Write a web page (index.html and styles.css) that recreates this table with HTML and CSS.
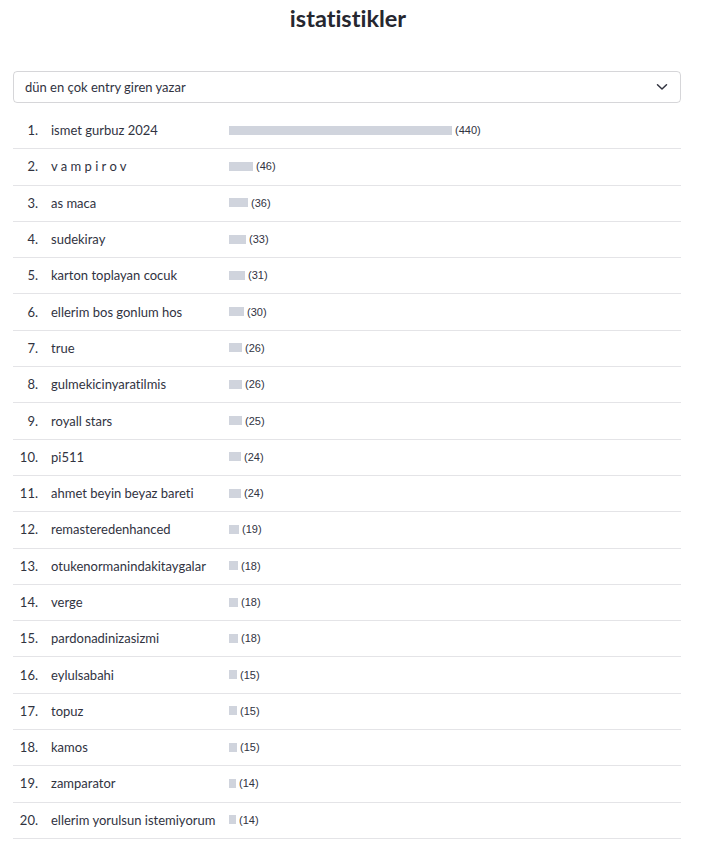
FILE: index.html
```html
<!DOCTYPE html>
<html lang="tr">
<head>
<meta charset="utf-8">
<link rel="stylesheet" href="styles.css">
</head>
<body>
<div class="page">
  <h1 class="title">istatistikler</h1>
  <div class="select">
    <span class="select-text">dün en çok entry giren yazar</span>
    <svg class="chevron" width="12" height="8" viewBox="0 0 12 8"><path d="M1.5 1.8 L6 6 L10.5 1.8" fill="none" stroke="#31333f" stroke-width="1.5" stroke-linecap="round" stroke-linejoin="round"/></svg>
  </div>
  <ol class="list">
    <li class="row"><span class="num">1.</span><span class="name">ismet gurbuz 2024</span><span class="bar" style="width:223px"></span><span class="count">(440)</span></li>
    <li class="row"><span class="num">2.</span><span class="name">v a m p i r o v</span><span class="bar" style="width:24px"></span><span class="count">(46)</span></li>
    <li class="row"><span class="num">3.</span><span class="name">as maca</span><span class="bar" style="width:19px"></span><span class="count">(36)</span></li>
    <li class="row"><span class="num">4.</span><span class="name">sudekiray</span><span class="bar" style="width:17px"></span><span class="count">(33)</span></li>
    <li class="row"><span class="num">5.</span><span class="name">karton toplayan cocuk</span><span class="bar" style="width:16px"></span><span class="count">(31)</span></li>
    <li class="row"><span class="num">6.</span><span class="name">ellerim bos gonlum hos</span><span class="bar" style="width:15px"></span><span class="count">(30)</span></li>
    <li class="row"><span class="num">7.</span><span class="name">true</span><span class="bar" style="width:13px"></span><span class="count">(26)</span></li>
    <li class="row"><span class="num">8.</span><span class="name">gulmekicinyaratilmis</span><span class="bar" style="width:13px"></span><span class="count">(26)</span></li>
    <li class="row"><span class="num">9.</span><span class="name">royall stars</span><span class="bar" style="width:13px"></span><span class="count">(25)</span></li>
    <li class="row"><span class="num">10.</span><span class="name">pi511</span><span class="bar" style="width:12px"></span><span class="count">(24)</span></li>
    <li class="row"><span class="num">11.</span><span class="name">ahmet beyin beyaz bareti</span><span class="bar" style="width:12px"></span><span class="count">(24)</span></li>
    <li class="row"><span class="num">12.</span><span class="name">remasteredenhanced</span><span class="bar" style="width:10px"></span><span class="count">(19)</span></li>
    <li class="row"><span class="num">13.</span><span class="name">otukenormanindakitaygalar</span><span class="bar" style="width:9px"></span><span class="count">(18)</span></li>
    <li class="row"><span class="num">14.</span><span class="name">verge</span><span class="bar" style="width:9px"></span><span class="count">(18)</span></li>
    <li class="row"><span class="num">15.</span><span class="name">pardonadinizasizmi</span><span class="bar" style="width:9px"></span><span class="count">(18)</span></li>
    <li class="row"><span class="num">16.</span><span class="name">eylulsabahi</span><span class="bar" style="width:8px"></span><span class="count">(15)</span></li>
    <li class="row"><span class="num">17.</span><span class="name">topuz</span><span class="bar" style="width:8px"></span><span class="count">(15)</span></li>
    <li class="row"><span class="num">18.</span><span class="name">kamos</span><span class="bar" style="width:8px"></span><span class="count">(15)</span></li>
    <li class="row"><span class="num">19.</span><span class="name">zamparator</span><span class="bar" style="width:7px"></span><span class="count">(14)</span></li>
    <li class="row"><span class="num">20.</span><span class="name">ellerim yorulsun istemiyorum</span><span class="bar" style="width:7px"></span><span class="count">(14)</span></li>
  </ol>
</div>
</body>
</html>
```

FILE: styles.css
```css
* { box-sizing: border-box; }
html, body { margin: 0; padding: 0; background: #fff; }
body {
  font-family: "Lato", "Noto Sans", sans-serif;
  font-variant-ligatures: none;
  color: #31333f;
}
.page {
  width: 668px;
  margin-left: 13px;
  padding-top: 4px;
}
.title {
  margin: 0;
  text-align: center;
  font-size: 23.5px;
  font-weight: 700;
  color: #262730;
  line-height: 28px;
  padding-left: 2px;
}
.select {
  margin-top: 39px;
  height: 32px;
  border: 1px solid rgba(49, 51, 63, 0.2);
  border-radius: 4px;
  display: flex;
  align-items: center;
  justify-content: space-between;
  padding: 0 12px 0 11px;
}
.select-text {
  font-size: 13px;
}
.chevron { display: block; }
.list {
  list-style: none;
  margin: 10px 0 0 0;
  padding: 0;
}
.row {
  height: 36.3px;
  border-bottom: 1px solid #e4e4e7;
  display: flex;
  align-items: center;
  font-size: 13px;
  padding-bottom: 1px;
}
.num {
  width: 25px;
  text-align: right;
  flex: none;
}
.name {
  width: 191px;
  padding-left: 13px;
  flex: none;
  white-space: nowrap;
}
.bar {
  height: 9px;
  background: #d0d4dd;
  flex: none;
}
.count {
  margin-left: 3px;
  font-family: "Liberation Sans", sans-serif;
  font-size: 11px;
  color: #31333f;
}
```
